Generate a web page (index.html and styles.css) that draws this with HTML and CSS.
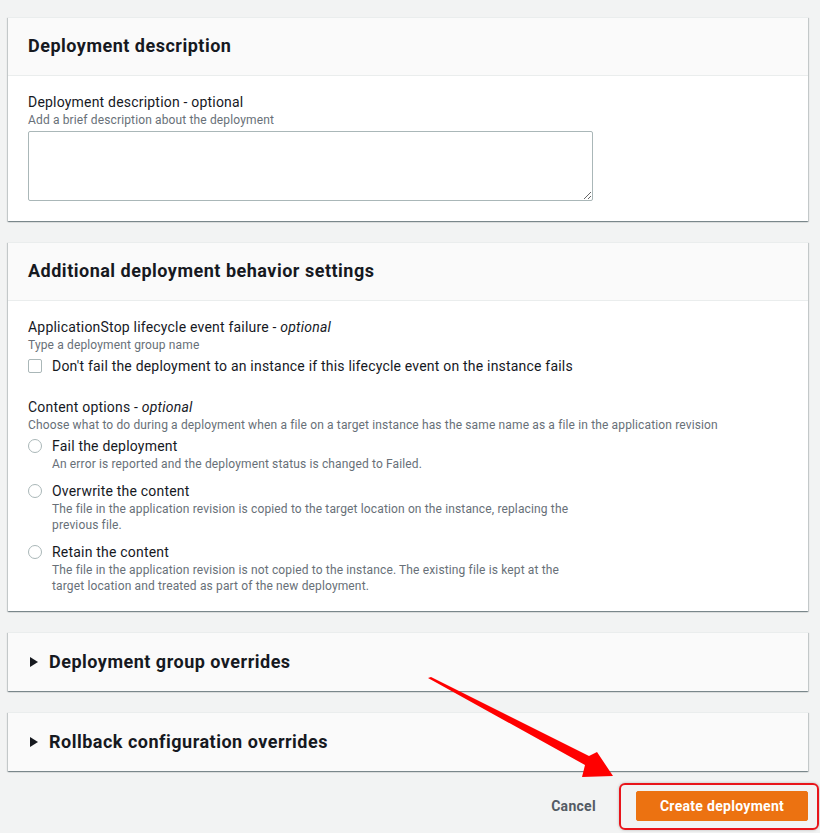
FILE: index.html
```html
<!DOCTYPE html>
<html>
<head>
<meta charset="utf-8">
<link rel="stylesheet" href="styles.css">
</head>
<body>
<div class="page">
  <section class="card">
    <header class="card-head"><h2>Deployment description</h2></header>
    <div class="card-body">
      <div class="label">Deployment description - optional</div>
      <div class="hint">Add a brief description about the deployment</div>
      <textarea class="textarea"></textarea>
    </div>
  </section>

  <section class="card">
    <header class="card-head"><h2>Additional deployment behavior settings</h2></header>
    <div class="card-body card-body-2">
      <div class="label">ApplicationStop lifecycle event failure - <i>optional</i></div>
      <div class="hint">Type a deployment group name</div>
      <label class="check-row"><span class="checkbox"></span><span>Don't fail the deployment to an instance if this lifecycle event on the instance fails</span></label>

      <div class="label label-gap">Content options - <i>optional</i></div>
      <div class="hint">Choose what to do during a deployment when a file on a target instance has the same name as a file in the application revision</div>
      <div class="radios">
        <div class="radio-item">
          <span class="radio"></span>
          <div class="radio-text">
            <div class="radio-label">Fail the deployment</div>
            <div class="radio-desc">An error is reported and the deployment status is changed to Failed.</div>
          </div>
        </div>
        <div class="radio-item">
          <span class="radio"></span>
          <div class="radio-text">
            <div class="radio-label">Overwrite the content</div>
            <div class="radio-desc">The file in the application revision is copied to the target location on the instance, replacing the<br>previous file.</div>
          </div>
        </div>
        <div class="radio-item">
          <span class="radio"></span>
          <div class="radio-text">
            <div class="radio-label">Retain the content</div>
            <div class="radio-desc">The file in the application revision is not copied to the instance. The existing file is kept at the<br>target location and treated as part of the new deployment.</div>
          </div>
        </div>
      </div>
    </div>
  </section>

  <section class="card card-collapsed">
    <header class="card-head collapsed-head"><span class="caret"></span><h2>Deployment group overrides</h2></header>
  </section>

  <section class="card card-collapsed">
    <header class="card-head collapsed-head"><span class="caret"></span><h2>Rollback configuration overrides</h2></header>
  </section>

  <div class="actions">
    <button class="btn-link">Cancel</button>
    <button class="btn-primary">Create deployment</button>
  </div>
</div>

<div class="highlight"></div>
<svg class="arrow" width="820" height="833" viewBox="0 0 820 833">
  <polygon points="428,678 431,677 589,756 597,752 613,776 582,777 585,765" fill="#ff0000"/>
</svg>
</body>
</html>
```

FILE: styles.css
```css
* { box-sizing: border-box; }
html, body { margin: 0; padding: 0; }
body {
  background: #f2f3f3;
  font-family: Roboto, "Open Sans", sans-serif;
  color: #16191f;
  width: 820px;
  height: 833px;
  overflow: hidden;
  position: relative;
}
.page {
  width: 800px;
  margin-left: 8px;
  padding-top: 17px;
  display: flex;
  flex-direction: column;
  gap: 21px;
}
.card {
  background: #fff;
  box-shadow: 0 1px 1px 0 rgba(0, 28, 36, 0.3), 1px 1px 1px 0 rgba(0, 28, 36, 0.15), -1px 1px 1px 0 rgba(0, 28, 36, 0.15);
  border-top: 1px solid #eaeded;
}
.card-head {
  background: #fafafa;
  border-bottom: 1px solid #eaeded;
  padding: 17px 20px 18px;
}
.card-head h2 {
  margin: 0;
  font-size: 18px;
  line-height: 22px;
  font-weight: 700;
  letter-spacing: 0.5px;
  color: #16191f;
}
.card-collapsed .card-head { border-bottom: none; padding-bottom: 18px; padding-top: 18px; }
.collapsed-head {
  display: flex;
  align-items: center;
  gap: 11px;
  padding-left: 22px;
}
.caret {
  width: 0; height: 0;
  border-top: 5px solid transparent;
  border-bottom: 5px solid transparent;
  border-left: 8px solid #16191f;
}
.card-body {
  padding: 16px 20px 20px;
  display: flex;
  flex-direction: column;
}
.card-body-2 { padding-bottom: 17px; }
.label {
  font-size: 14px;
  line-height: 20px;
  letter-spacing: 0.2px;
  color: #16191f;
}
.label i { font-style: italic; }
.label-gap { margin-top: 21px; }
.hint {
  font-size: 12px;
  line-height: 16px;
  letter-spacing: 0.14px;
  color: #687078;
}
.textarea {
  margin-top: 3px;
  width: 565px;
  height: 70px;
  border: 1px solid #aab7b8;
  border-radius: 2px;
  resize: vertical;
  font-family: inherit;
}
.check-row {
  margin-top: 3px;
  display: flex;
  align-items: center;
  gap: 10px;
  font-size: 14px;
  line-height: 20px;
  letter-spacing: 0.2px;
}
.checkbox {
  width: 14px; height: 14px;
  border: 1px solid #aab7b8;
  border-radius: 2px;
  background: #fff;
  flex: none;
}
.radios {
  display: flex;
  flex-direction: column;
  gap: 9px;
  margin-top: 3px;
}
.radio-item {
  display: flex;
  gap: 10px;
  align-items: flex-start;
}
.radio {
  margin-top: 3px;
  width: 14px; height: 14px;
  border: 1px solid #aab7b8;
  border-radius: 50%;
  flex: none;
}
.radio-label {
  font-size: 14px;
  line-height: 20px;
  letter-spacing: 0.2px;
}
.radio-desc {
  font-size: 12px;
  line-height: 16px;
  letter-spacing: 0.14px;
  color: #687078;
}
.actions {
  display: flex;
  justify-content: flex-end;
  align-items: center;
  gap: 20px;
  margin-top: -1px;
}
.btn-link {
  background: none;
  border: none;
  font-family: inherit;
  font-size: 14px;
  font-weight: 700;
  letter-spacing: 0.3px;
  color: #545b64;
  padding: 4px 20px;
}
.btn-primary {
  background: #ec7211;
  color: #fff;
  border: 1px solid #ec7211;
  border-radius: 2px;
  font-family: inherit;
  font-size: 14px;
  font-weight: 700;
  letter-spacing: 0.3px;
  width: 172px;
  height: 30px;
  padding: 0;
}
.highlight {
  position: absolute;
  left: 619px;
  top: 783px;
  width: 200px;
  height: 47px;
  border: 2px solid #e8141a;
  border-radius: 6px;
  box-shadow: 0 0 3px rgba(0,0,0,0.25);
}
.arrow {
  position: absolute;
  left: 0;
  top: 0;
  pointer-events: none;
}
```
